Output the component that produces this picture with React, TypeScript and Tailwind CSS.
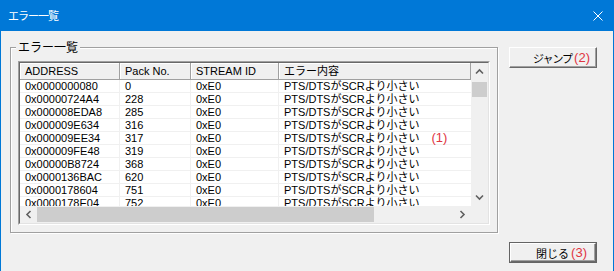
import React from 'react';

const rows = [
  ['0x0000000080', '0'],
  ['0x00000724A4', '228'],
  ['0x000008EDA8', '285'],
  ['0x000009E634', '316'],
  ['0x000009EE34', '317'],
  ['0x000009FE48', '319'],
  ['0x00000B8724', '368'],
  ['0x0000136BAC', '620'],
  ['0x0000178604', '751'],
  ['0x0000178E04', '752'],
];

function Chevron({ dir }: { dir: 'up' | 'down' | 'left' | 'right' }) {
  // small scroll-arrow chevron, 9x5 base drawn upward then rotated
  const rot = { up: 0, down: 180, left: 270, right: 90 }[dir];
  return (
    <svg width="9" height="9" viewBox="0 0 9 9" style={{ transform: `rotate(${rot}deg)` }}>
      <polyline points="1,6.5 4.5,3 8,6.5" fill="none" stroke="#606060" strokeWidth="1.6" />
    </svg>
  );
}

function Mark({ n }: { n: number }) {
  return <span className="ml-[2px] font-['Liberation_Sans',sans-serif] text-[13px] leading-[14px] text-[#e0353f]">({n})</span>;
}

export default function App() {
  return (
    <div className="w-[614px] h-[271px] flex flex-col bg-[#f0f0f0] border-x border-[#0078d7] overflow-hidden font-['Noto_Sans_CJK_JP',sans-serif] text-black">
      {/* title bar */}
      <div className="h-[31px] shrink-0 bg-[#0078d7] flex items-center pl-[7px] pr-[10px] text-white">
        <span className="text-[11px] tracking-[-1px]">エラー一覧</span>
        <svg className="ml-auto" width="10" height="10" viewBox="0 0 10 10">
          <path d="M0.5 0.5 L9.5 9.5 M9.5 0.5 L0.5 9.5" stroke="#fff" strokeWidth="1" />
        </svg>
      </div>

      <div className="flex pt-[16px]">
        {/* group box */}
        <div className="relative ml-[9px] w-[488px] h-[186px] border border-[#a0a0a0] shadow-[inset_1px_1px_0_#fff,1px_1px_0_#fff] pt-[13px] pl-[7px]">
          <span className="absolute -top-[8px] left-[5px] px-[2px] bg-[#f0f0f0] text-[12px] leading-[14px]">エラー一覧</span>

          {/* list view */}
          <div className="w-[472px] h-[164px] border border-t-[#a0a0a0] border-l-[#a0a0a0] border-r-white border-b-white">
            <div className="h-full border border-t-[#696969] border-l-[#696969] border-r-[#e3e3e3] border-b-[#e3e3e3] bg-white grid grid-cols-[1fr_17px] grid-rows-[1fr_17px] font-['Liberation_Sans','Noto_Sans_CJK_JP',sans-serif] text-[11px]">
              <div className="overflow-hidden">
                <div className="flex h-[17px] bg-[#f0f0f0] leading-[16px]">
                  <div className="w-[100px] shrink-0 pl-[5px] border-r border-b border-[#a0a0a0] shadow-[inset_1px_1px_0_#fff]">ADDRESS</div>
                  <div className="w-[71px] shrink-0 pl-[5px] border-r border-b border-[#a0a0a0] shadow-[inset_1px_1px_0_#fff]">Pack No.</div>
                  <div className="w-[88px] shrink-0 pl-[5px] border-r border-b border-[#a0a0a0] shadow-[inset_1px_1px_0_#fff]">STREAM ID</div>
                  <div className="w-[192px] shrink-0 pl-[5px] border-r border-b border-[#a0a0a0] shadow-[inset_1px_1px_0_#fff]">エラー内容</div>
                </div>
                {rows.map(([addr, pack], i) => (
                  <div key={addr} className="flex h-[13px] leading-[12px] border-b border-[#f0f0f0] whitespace-nowrap">
                    <div className="w-[100px] shrink-0 pl-[5px] border-r border-[#f0f0f0]">{addr}</div>
                    <div className="w-[71px] shrink-0 pl-[5px] border-r border-[#f0f0f0]">{pack}</div>
                    <div className="w-[88px] shrink-0 pl-[5px] border-r border-[#f0f0f0]">0xE0</div>
                    <div className="flex-1 pl-[5px] flex items-center">
                      PTS/DTSがSCRより小さい
                      {i === 4 && <span className="ml-[10px]"><Mark n={1} /></span>}
                    </div>
                  </div>
                ))}
              </div>

              {/* vertical scrollbar */}
              <div className="bg-[#f0f0f0] flex flex-col">
                <div className="h-[17px] flex items-center justify-center"><Chevron dir="up" /></div>
                <div className="mx-[1px] mt-[2px] h-[15px] bg-[#cdcdcd]" />
                <div className="flex-1" />
                <div className="h-[17px] flex items-center justify-center"><Chevron dir="down" /></div>
              </div>

              {/* horizontal scrollbar */}
              <div className="bg-[#f0f0f0] flex">
                <div className="w-[17px] flex items-center justify-center"><Chevron dir="left" /></div>
                <div className="my-[1px] w-[337px] bg-[#cdcdcd]" />
                <div className="flex-1" />
                <div className="w-[17px] flex items-center justify-center"><Chevron dir="right" /></div>
              </div>
              <div className="bg-[#f0f0f0]" />
            </div>
          </div>
        </div>

        <button className="ml-[11px] w-[88px] h-[21px] bg-[#f0f0f0] border border-t-white border-l-white border-r-[#696969] border-b-[#696969] shadow-[inset_-1px_-1px_0_#a0a0a0] flex items-center justify-end pr-[6px]">
          <span className="text-[11px] leading-[14px] tracking-[-1px]">ジャンプ</span>
          <Mark n={2} />
        </button>
      </div>

      <div className="flex justify-end pr-[16px] mt-[9px]">
        <button className="w-[88px] h-[21px] bg-[#f0f0f0] border border-[#646464]">
          <div className="h-full border border-t-white border-l-white border-r-[#696969] border-b-[#696969] shadow-[inset_-1px_-1px_0_#a0a0a0] flex items-center justify-end pr-[8px]">
            <span className="text-[11px] leading-[14px]">閉じる</span>
            <Mark n={3} />
          </div>
        </button>
      </div>
    </div>
  );
}
